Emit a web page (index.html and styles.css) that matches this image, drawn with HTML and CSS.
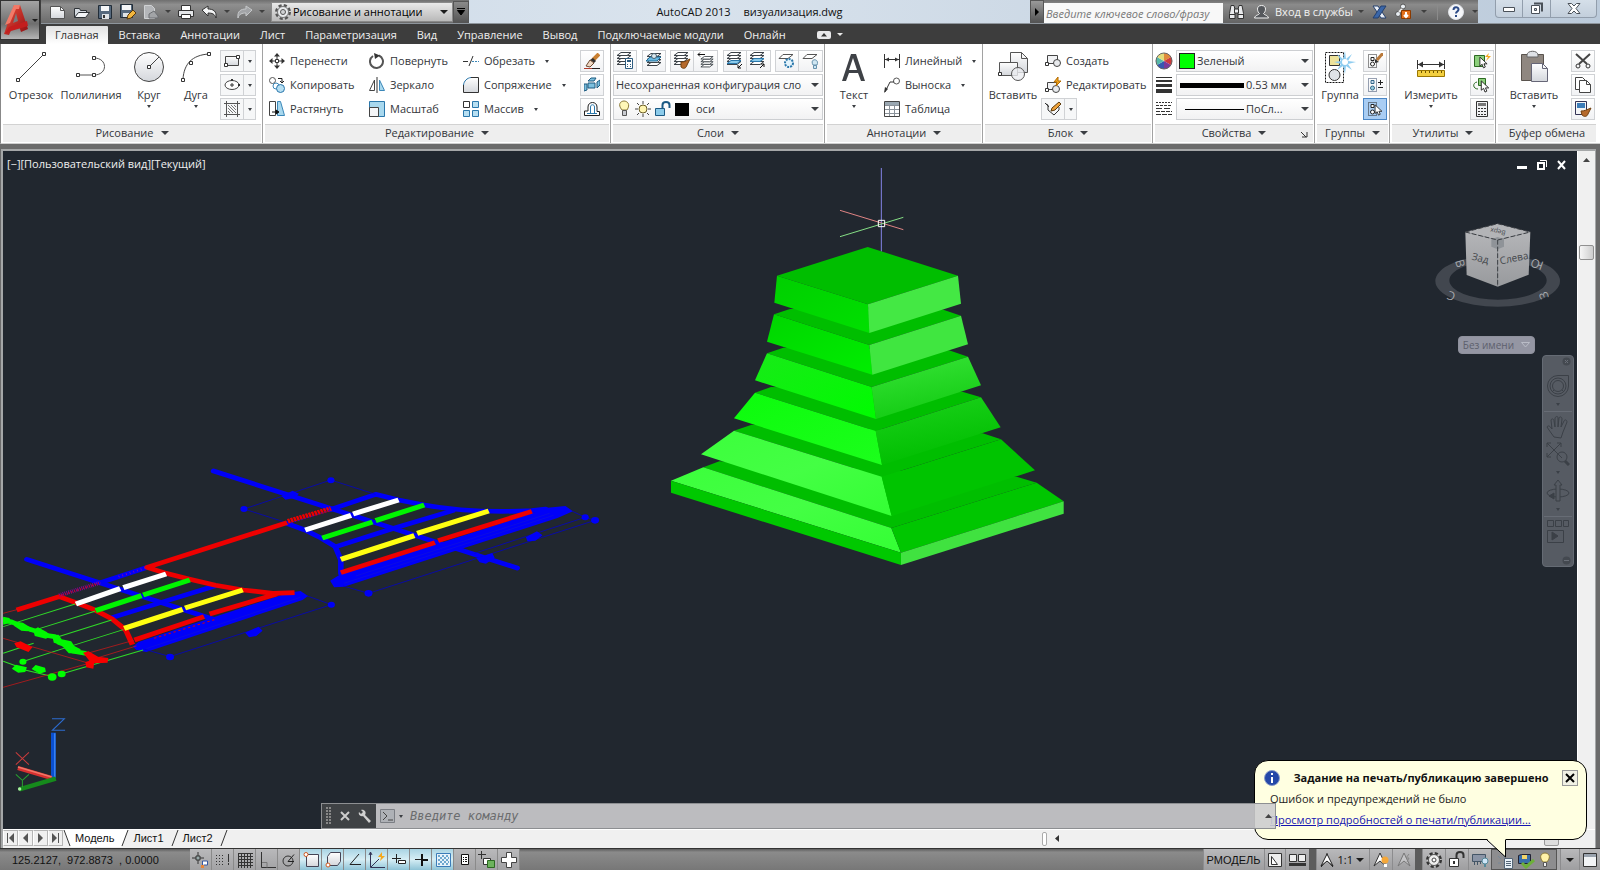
FILE: index.html
```html
<!DOCTYPE html>
<html lang="ru">
<head>
<meta charset="utf-8">
<title>AutoCAD 2013 – визуализация.dwg</title>
<link rel="stylesheet" href="styles.css">
</head>
<body>
<svg class="defs" aria-hidden="true">
  <defs>
    <linearGradient id="gDoc" x1="0" y1="0" x2="0" y2="1"><stop offset="0" stop-color="#fff"/><stop offset="1" stop-color="#d4d7dc"/></linearGradient>
    <linearGradient id="gRed" x1="0" y1="0" x2="1" y2="1"><stop offset="0" stop-color="#f0503c"/><stop offset="1" stop-color="#8e0d12"/></linearGradient>
    <linearGradient id="t1l" x1="0" y1="0" x2="1" y2="1"><stop offset="0" stop-color="#00cf00"/><stop offset="1" stop-color="#00e000"/></linearGradient>
    <linearGradient id="t2l" x1="0" y1="0" x2="1" y2="1"><stop offset="0" stop-color="#00d600"/><stop offset="1" stop-color="#00ee00"/></linearGradient>
    <linearGradient id="t3l" x1="0" y1="0" x2="1" y2="1"><stop offset="0" stop-color="#18ea18"/><stop offset="1" stop-color="#00fc00"/></linearGradient>
    <linearGradient id="t4l" x1="0" y1="0" x2="1" y2="1"><stop offset="0" stop-color="#0cfc0c"/><stop offset="1" stop-color="#1cff1c"/></linearGradient>
    <linearGradient id="t5l" x1="0" y1="0" x2="1" y2="1"><stop offset="0" stop-color="#3cff3c"/><stop offset=".5" stop-color="#44ff44"/><stop offset="1" stop-color="#34ff34"/></linearGradient>
    <linearGradient id="t3r" x1="0" y1="0" x2=".3" y2="1"><stop offset="0" stop-color="#38e438"/><stop offset="1" stop-color="#14cc14"/></linearGradient>
    <linearGradient id="t4r" x1="0" y1="0" x2=".3" y2="1"><stop offset="0" stop-color="#1cd21c"/><stop offset="1" stop-color="#00be00"/></linearGradient>
    <linearGradient id="gCube" x1="0" y1="0" x2="0" y2="1"><stop offset="0" stop-color="#b4b5b8"/><stop offset="1" stop-color="#989a9d"/></linearGradient>
  </defs>
  <symbol id="i-layers" viewBox="0 0 16 16"><g fill="#fff" stroke="#3c4248"><path d="M5 9.500h10l-4 3H1z"/><path d="M5 6.500h10l-4 3H1z"/><path d="M5 3.500h10l-4 3H1z"/><path d="M5 .5h10l-4 3H1z"/></g></symbol>
  <symbol id="i-node" viewBox="0 0 4 4"><path d="M.5.5h3v3h-3z" fill="#fff" stroke="#333"/></symbol>
  <symbol id="i-cursor" viewBox="0 0 10 14"><path d="M1 1v10l2.500-2 1.500 4 2-1-1.500-3.500H9z" fill="#fff" stroke="#222"/></symbol>
</svg>

<div class="app">
  <header class="head">
    <button class="app-btn" aria-label="Меню приложения">
      <svg width="26" height="32" viewBox="0 0 26 32"><path d="M10 1h6l8 24-7 3-2-6-7 2-3 7-5-1z" fill="url(#gRed)"/><path d="M12 9l2 8-5 2z" fill="#7a7a7c"/><path d="M1 30l4-7 18-6 1 5-17 5z" fill="#c41e1e"/><path d="M10 1l-9 20 5-2 6-14 3 0 1-4z" fill="#f27a68"/></svg>
      <i class="tri dark"></i>
    </button>
    <div class="titlebar">
      <div class="qat">
        <button aria-label="Создать"><svg width="18" height="16"><path d="M1.500 2.500h10l4 4v8h-14z" fill="url(#gDoc)" stroke="#555"/><path d="M11.500 2.500v4h4" fill="none" stroke="#555"/></svg></button>
        <button aria-label="Открыть"><svg width="18" height="16"><path d="M1.500 13.500v-9h5l1 2h6v3" fill="#d5dae0" stroke="#2f3337"/><path d="M1.500 13.500l4-5h11l-4 5z" fill="#f3f5f7" stroke="#2f3337"/></svg></button>
        <button aria-label="Сохранить"><svg width="16" height="16"><path d="M1.500 1.500h13v13h-13z" fill="#56697d" stroke="#222d38"/><path d="M4 2h8v5H4z" fill="#f5f6f7"/><path d="M5 10h7v5H5z" fill="#dfe3e6"/><path d="M6 11h2v3H6z" fill="#333"/></svg></button>
        <button aria-label="Сохранить как"><svg width="18" height="18"><path d="M1.500 1.500h12v13h-12z" fill="#56697d" stroke="#222d38"/><path d="M3 2h9v5H3z" fill="#f5f6f7"/><path d="M4 10h6v4H4z" fill="#dfe3e6"/><path d="M8 16l1-4 5-5 3 3-5 5z" fill="#f3b73f" stroke="#5c3a0a"/></svg></button>
        <button aria-label="Экспорт"><svg width="16" height="16"><path d="M1.500 1.500h7l3 3v10h-10z" fill="#b4b6b9" stroke="#d0d2d4"/><path d="M6 14v-4l5-3 4 5v2z" fill="#a2a4a7" stroke="#6c6f73"/></svg></button>
        <i class="tri dim"></i>
        <button aria-label="Печать"><svg width="18" height="16"><path d="M4.500 1.500h9v5h-9z" fill="#fff" stroke="#333"/><path d="M1.500 6.500h15v6h-15z" fill="#e4e6e9" stroke="#333"/><path d="M4.500 10.500h9v4h-9z" fill="#fff" stroke="#333"/></svg></button>
        <button aria-label="Отменить"><svg width="17" height="14"><path d="M1 5l6-4v3c5 0 9 2 8 9-1-4-4-5-8-5v3z" fill="#f4f5f6" stroke="#333"/></svg></button>
        <i class="tri dim"></i>
        <button aria-label="Повторить"><svg width="17" height="14"><path d="M16 5l-6-4v3C5 4 1 6 2 13c1-4 4-5 8-5v3z" fill="#a2a4a7" stroke="#c6c8ca"/></svg></button>
        <i class="tri dim"></i>
        <label class="workspace">
          <svg width="18" height="18" viewBox="0 0 18 18"><circle cx="9" cy="9" r="6.500" fill="#d6d9dd" stroke="#555" stroke-width="3" stroke-dasharray="3 2.100"/><circle cx="9" cy="9" r="5.500" fill="#e8eaec" stroke="#777"/><circle cx="9" cy="9" r="2.500" fill="#d0d2d4" stroke="#555"/></svg>
          <select aria-label="Рабочее пространство"><option>Рисование и аннотации</option></select><i class="tri dark big"></i>
        </label>
        <button class="qat-more" aria-label="Настройка"><svg width="10" height="8"><path d="M1 .5h8M1.500 2.500h7L5 7z" stroke="#000"/></svg></button>
      </div>
      <h1 class="doc-title"><span>AutoCAD 2013</span><span>визуализация.dwg</span></h1>
      <div class="info">
        <button class="info-toggle" aria-label="Скрыть поиск"><svg width="6" height="10"><path d="M1 1l4 4-4 4z"/></svg></button>
        <input class="search" type="text" placeholder="Введите ключевое слово/фразу" aria-label="Поиск">
        <button aria-label="Найти"><svg width="17" height="16"><g fill="#e9eaec" stroke="#333"><path d="M3 1.500h3l1 4v9H1.500v-5z"/><path d="M11 1.500h3l1.500 8v5H10v-9z"/><path d="M6.500 5h4v4h-4z"/></g><path d="M1 10.500h6M10 10.500h6" stroke="#333"/></svg></button>
        <button class="signin"><svg width="17" height="16"><path d="M8.500 1.500c6 0 4 7 2 8 1 2 4 1 5 4.500h-14c1-3.500 4-2.500 5-4.500-2-1-4-8 2-8z" fill="#55585c" stroke="#f2f2f2"/></svg><span>Вход в службы</span><i class="tri dim"></i></button>
        <button class="xch" aria-label="Exchange"><svg width="15" height="14"><path d="M1 1h5l8 12H9z" fill="#e9eef5" stroke="#25406e"/><path d="M14 1H9L1 13h5z" fill="#3a66a8" stroke="#25406e"/></svg></button>
        <button aria-label="Подключение"><svg width="18" height="17"><circle cx="8" cy="3.500" r="2.500" fill="#e8edf2" stroke="#555"/><circle cx="3" cy="11" r="2.500" fill="#e8edf2" stroke="#555"/><path d="M7 6l-3 3" stroke="#eee" stroke-width="2"/><path d="M6.500 7.500h9v8h-9z" fill="#e2701c" stroke="#8b3a00"/><path d="M11 9v5M9 12l2 2 2-2" stroke="#fff" stroke-width="2" fill="none"/></svg></button>
        <i class="tri dim"></i><i class="bar"></i>
        <button aria-label="Справка"><svg width="16" height="16"><circle cx="8" cy="8" r="7.500" fill="#f6f7f9" stroke="#dfe2e6"/><path d="M5.500 6c0-3.500 5-3.500 5-.5 0 2-2.500 2-2.500 4M8 11v2" fill="none" stroke="#2c4a86" stroke-width="2"/></svg></button>
        <i class="tri dim"></i>
      </div>
      <div class="winctl">
        <button aria-label="Свернуть"><svg width="14" height="8"><path d="M1.500 2.500h11v4h-11z" fill="#fff" stroke="#4a5159"/></svg></button>
        <button aria-label="Свернуть в окно"><svg width="13" height="13"><path d="M4 1.500h8v8" fill="none" stroke="#4a5159" stroke-width="2"/><path d="M1.500 3.500h8v8h-8z" fill="#fff" stroke="#4a5159"/><path d="M4.500 6.500h2v2h-2z" fill="#ccd5df" stroke="#4a5159"/></svg></button>
        <button class="close" aria-label="Закрыть"><svg width="14" height="11"><path d="M1 .5h3.500L7 3l2.500-2.500H13L9 5.500l4 5H9.500L7 8l-2.500 2.500H1l4-5z" fill="#fff" stroke="#4a5159"/></svg></button>
      </div>
    </div>
    <nav class="tabs">
      <a href="#" class="on">Главная</a><a href="#">Вставка</a><a href="#">Аннотации</a><a href="#">Лист</a><a href="#">Параметризация</a><a href="#">Вид</a><a href="#">Управление</a><a href="#">Вывод</a><a href="#">Подключаемые модули</a><a href="#">Онлайн</a>
      <button class="fold" aria-label="Свернуть ленту"><svg width="14" height="8"><rect width="14" height="8" rx="2" fill="#e8e8ea"/><path d="M4 5.500h6L7 2z" fill="#333"/></svg><i class="tri lite"></i></button>
    </nav>
  </header>

  <main class="ribbon">
    <section class="panel p-draw">
      <div class="body">
        <button class="bigbtn w58"><svg width="32" height="32"><path d="M3 30L29 4" stroke="#444"/><use href="#i-node" x="1" y="28" width="4" height="4"/><use href="#i-node" x="27" y="2" width="4" height="4"/></svg><span>Отрезок</span></button>
        <button class="bigbtn w64"><svg width="32" height="32"><path d="M3 25h16c14 0 14-17 0-17" stroke="#555" fill="none"/><use href="#i-node" x="1" y="23" width="4" height="4"/><use href="#i-node" x="17" y="23" width="4" height="4"/><use href="#i-node" x="17" y="6" width="4" height="4"/></svg><span>Полилиния</span></button>
        <button class="bigbtn w52"><svg width="32" height="32"><circle cx="16" cy="17" r="14.500" fill="url(#gDoc)" stroke="#444"/><path d="M16 17l10-10" stroke="#444"/><use href="#i-node" x="14" y="15" width="4" height="4"/></svg><span>Круг</span><i class="tri"></i></button>
        <button class="bigbtn w42"><svg width="32" height="32"><path d="M3 29C4 14 12 5 29 4" fill="none" stroke="#444"/><use href="#i-node" x="1" y="28" width="4" height="4"/><use href="#i-node" x="9" y="11" width="4" height="4"/><use href="#i-node" x="27" y="2" width="4" height="4"/></svg><span>Дуга</span><i class="tri"></i></button>
        <div class="stack end">
          <button class="ib split" aria-label="Прямоугольник"><svg width="16" height="16"><path d="M1.500 3.500h13v9h-13z" fill="url(#gDoc)" stroke="#444"/><use href="#i-node" x="0" y="10" width="4" height="4"/><use href="#i-node" x="12" y="2" width="4" height="4"/></svg><i class="tri"></i></button>
          <button class="ib split" aria-label="Эллипс"><svg width="16" height="16"><ellipse cx="8" cy="8" rx="7" ry="4.500" fill="#fff" stroke="#444"/><path d="M8 6v4M6 8h4" stroke="#333"/><path d="M14 7h2v2h-2zM7 2h2v2H7z" fill="#333"/></svg><i class="tri"></i></button>
          <button class="ib split" aria-label="Штриховка"><svg width="16" height="16"><path d="M2.500 0v16M13.500 0v16M0 2.500h16M0 13.500h16" stroke="#555"/><path d="M4 4l8 8M7 4l5 5M4 7l5 5M10 4l2 2M4 10l2 2" stroke="#777"/></svg><i class="tri"></i></button>
        </div>
      </div>
      <h2>Рисование<i class="tri big"></i></h2>
    </section>

    <section class="panel p-edit">
      <div class="body">
        <div class="cmds three">
          <button class="cmd"><svg width="16" height="16"><path d="M8 0l3 3.500H5zM8 16l3-3.500H5zM0 8l3.500-3v6zM16 8l-3.500-3v6z" fill="#333"/><path d="M8 2v4M8 10v4M2 8h4M10 8h4" stroke="#333"/><use href="#i-node" x="6" y="6" width="4" height="4"/></svg>Перенести</button>
          <button class="cmd"><svg width="16" height="16"><path d="M4 3a6.500 6.500 0 1 0 6-.5" fill="none" stroke="#555" stroke-width="2"/><path d="M5 0l6 2.500L6 6z" fill="#333"/></svg>Повернуть</button>
          <button class="cmd"><svg width="16" height="16"><path d="M0 8.500h5M6 13l4-10" stroke="#333"/><path d="M9 8.500h7" stroke="#3b87b8" stroke-dasharray="2 1"/></svg>Обрезать<i class="tri"></i></button>
          <button class="cmd"><svg width="16" height="16"><circle cx="3.500" cy="3.500" r="3" fill="#fff" stroke="#555"/><circle cx="7" cy="9" r="3" fill="#fff" stroke="#3b87b8"/><circle cx="11.500" cy="11.500" r="4" fill="#b7dff2" stroke="#2a77ab"/><path d="M9 1.500h4v4M11 4l2 2 2-2" fill="none" stroke="#222"/></svg>Копировать</button>
          <button class="cmd"><svg width="16" height="16"><path d="M5.500 3v10.500h-5z" fill="#fff" stroke="#444"/><path d="M10.500 3v10.500h5z" fill="#a8d8ee" stroke="#3b87b8"/><path d="M8 0v16" stroke="#333"/></svg>Зеркало</button>
          <button class="cmd"><svg width="16" height="16"><path d="M.5 15.500V9C1 4 4 1 9 .5h6.500v15z" fill="url(#gDoc)"/><path d="M.5 8C1 4 4 1 8 .5" fill="none" stroke="#2a77ab"/><path d="M8 .5h7.500v15H.5V8" fill="none" stroke="#333"/></svg>Сопряжение<i class="tri"></i></button>
          <button class="cmd"><svg width="16" height="16"><path d="M.5.5h6v14h-6z" fill="#fff" stroke="#444"/><path d="M8.500.5h3l4 14h-7z" fill="#a8d8ee" stroke="#3b87b8"/><path d="M3 11h5M7 9l3 2-3 2z" stroke="#111" fill="#111"/></svg>Растянуть</button>
          <button class="cmd"><svg width="16" height="16"><path d="M.5.5h15v15h-15z" fill="#a8d8ee" stroke="#2a77ab"/><path d="M.5 6.500h9v9h-9z" fill="#f5f6f8" stroke="#444"/></svg>Масштаб</button>
          <button class="cmd"><svg width="16" height="16"><path d="M.5.5h6v6h-6z" fill="#fff" stroke="#333"/><path d="M9.500.5h6v6h-6zM.5 9.500h6v6h-6zM9.500 9.500h6v6h-6z" fill="#b7dff2" stroke="#2a77ab"/></svg>Массив<i class="tri"></i></button>
        </div>
        <div class="stack end">
          <button class="ib" aria-label="Стереть"><svg width="16" height="16"><path d="M15 1L9 7" stroke="#c98032" stroke-width="4"/><path d="M9 5l3 3-2 2-4-3z" fill="#333"/><path d="M6 7l4 3-4 4-4-1z" fill="#f0d9c4" stroke="#6b4a33"/><path d="M0 15.500h8" stroke="#b03a2c"/><path d="M8 15.500h8" stroke="#222"/></svg></button>
          <button class="ib" aria-label="Расчленить"><svg width="16" height="16"><path d="M4 4l3-3h5l-2 3zM4 6h7v5H4zM13 5l3-2v5l-3 3zM0 7h3v6l-3 1z" fill="#7cc0df" stroke="#1d5b80"/></svg></button>
          <button class="ib" aria-label="Подобие"><svg width="16" height="16"><path d="M.5 14.500h15v-4H13V6c0-6-9-6-9 0v4H.5z" fill="#fff" stroke="#222"/><path d="M3 12.500h10M6.500 12V6c0-3 4-3 4 0v6" fill="none" stroke="#2a77ab"/></svg></button>
        </div>
      </div>
      <h2>Редактирование<i class="tri big"></i></h2>
    </section>

    <section class="panel p-layers">
      <div class="body col">
        <div class="row">
          <button class="ib" aria-label="Свойства слоя"><svg width="18" height="18"><use href="#i-layers" x="0" y="0" width="16" height="16"/><path d="M9.500 6.500h7v10h-7z" fill="#fff" stroke="#2f5d80"/><path d="M11 8h4v2h-4zM11 12h1v1h-1zM14 12h1v1h-1zM11 14h1v1h-1zM14 14h1v1h-1z" fill="#2f5d80"/></svg></button>
          <button class="ib" aria-label="Сделать текущим"><svg width="16" height="16"><use href="#i-layers" width="16" height="16"/><path d="M4 4h11l-4 4H0z" fill="#69b9e2" stroke="#1f6a96"/><circle cx="8" cy="3" r="2.500" fill="#dbe9f0" stroke="#48606e"/></svg></button>
          <span class="pair"><button class="ib" aria-label="Копировать свойства слоя"><svg width="18" height="18"><use href="#i-layers" width="16" height="16"/><path d="M8 10c4 0 5-1 9-3l-3 6c-1 4-4 4-6 2z" fill="#b66a2c" stroke="#70400f"/></svg></button><button class="ib" aria-label="Предыдущий слой"><svg width="18" height="18"><use href="#i-layers" x="3" y="4" width="14" height="14"/><path d="M1 2.500h7M3 .5l-2 2 2 2" fill="none" stroke="#111"/></svg></button></span>
          <span class="pair"><button class="ib" aria-label="Изолировать"><svg width="18" height="18"><use href="#i-layers" width="16" height="16"/><path d="M5 8.500h10l-4 3H1z" fill="#8ccbea" stroke="#2a77ab"/><path d="M16 12l-4 4M12 13v3h3" stroke="#111" fill="none"/></svg></button><button class="ib" aria-label="Отключить изоляцию"><svg width="18" height="18"><use href="#i-layers" width="16" height="16"/><path d="M5 6.500h10l-4 3H1z" fill="#8ccbea" stroke="#2a77ab"/><path d="M11 16l4-4M12 12h3v3" stroke="#111" fill="none"/></svg></button></span>
          <span class="pair"><button class="ib" aria-label="Заморозить"><svg width="18" height="18"><path d="M5 2.500h10l-5 4H1z" fill="#fff" stroke="#555"/><circle cx="11" cy="11" r="4" fill="#e3f3fb" stroke="#2a77ab" stroke-width="2" stroke-dasharray="2 1"/></svg></button><button class="ib" aria-label="Отключить"><svg width="18" height="18"><path d="M5 2.500h10l-5 4H1z" fill="#fff" stroke="#555"/><path d="M11 13c-4-7 7-7 4 0zM11.500 13.500h3v3h-3z" fill="#cfe6f2" stroke="#6691ac"/></svg></button></span>
        </div>
        <label class="combo"><select aria-label="Конфигурация слоев"><option>Несохраненная конфигурация сло</option></select><i class="tri big"></i></label>
        <label class="combo"><svg class="layer-ico" width="76" height="18"><path d="M6 10C1 4 5 1 8 1s7 3 3 9z" fill="#fff7b8" stroke="#8b7a3a"/><path d="M6.500 10.500h4v5h-4z" fill="#c9cbd0" stroke="#555"/><circle cx="27" cy="9" r="4" fill="#fff5b0" stroke="#6a5d28"/><path d="M27 1v3M27 14v3M19 9h3M32 9h3M21 3l2 2M33 3l-2 2M21 15l2-2M33 15l-2-2" stroke="#444"/><path d="M39.500 8.500h9v7h-9z" fill="#8ccbea" stroke="#1c5a84"/><path d="M46.500 8V5c0-4 7-4 7 0v3" fill="none" stroke="#1c5a84" stroke-width="2"/><path d="M59 3h14v13H59z"/></svg><select aria-label="Слой"><option>оси</option></select><i class="tri big"></i></label>
      </div>
      <h2>Слои<i class="tri big"></i></h2>
    </section>

    <section class="panel p-anno">
      <div class="body">
        <button class="bigbtn w54"><svg width="32" height="32"><path fill-rule="evenodd" d="M13 4h5l9 27h-4l-3-8h-9l-3 8H4zM15 8l-4 12h8z" fill="#3e4146"/></svg><span>Текст</span><i class="tri"></i></button>
        <div class="cmds one">
          <button class="cmd"><svg width="16" height="16"><path d="M.5 1v14M15.500 1v14M1 6.500h14" stroke="#333"/><path d="M1 6.500l4-2v4zM15 6.500l-4-2v4z" fill="#333"/></svg>Линейный<i class="tri"></i></button>
          <button class="cmd"><svg width="16" height="16"><circle cx="12.500" cy="4" r="3" fill="#fff" stroke="#555"/><path d="M1 15l5-10h4" fill="none" stroke="#333"/><path d="M0 16l1-6 3 2z" fill="#333"/></svg>Выноска<i class="tri"></i></button>
          <button class="cmd"><svg width="16" height="16"><path d="M.5.5h15v15H.5z" fill="#fff" stroke="#444"/><path d="M1 1h14v3H1z" fill="#9aa7b1"/><path d="M1 4.500h14M1 8.500h14M1 12.500h14M5.500 4v11M10.500 4v11" stroke="#8a929a"/></svg>Таблица</button>
        </div>
      </div>
      <h2>Аннотации<i class="tri big"></i></h2>
    </section>

    <section class="panel p-block">
      <div class="body">
        <button class="bigbtn w56"><svg width="32" height="32"><path d="M13.500 2.500h11l6 6v14h-17z" fill="url(#gDoc)" stroke="#555"/><path d="M24.500 2.500v6h6" fill="none" stroke="#555"/><path d="M2.500 12.500h18v13h-18z" fill="url(#gDoc)" stroke="#555"/><circle cx="21" cy="24" r="6.500" fill="#eceef1" fill-opacity=".8" stroke="#555"/><use href="#i-node" x="1" y="22" width="4" height="4"/></svg><span>Вставить</span></button>
        <div class="stack grow">
          <button class="cmd"><svg width="16" height="16"><path d="M2.500 2.500h10v8h-10z" fill="#f1f2f4" stroke="#444"/><circle cx="12" cy="10" r="3.500" fill="#e8eaed" stroke="#444"/><use href="#i-node" x="0" y="9" width="4" height="4"/></svg>Создать</button>
          <button class="cmd"><svg width="16" height="16"><path d="M2.500 5.500h9v7h-9z" fill="#f1f2f4" stroke="#444"/><circle cx="11" cy="12" r="3.500" fill="#e8eaed" stroke="#444"/><path d="M13 0l-4 5h3l-1 4 5-5h-3z" fill="#f5a81c" stroke="#b36b00"/><use href="#i-node" x="0" y="11" width="4" height="4"/></svg>Редактировать</button>
          <button class="ib split" aria-label="Атрибуты"><svg width="16" height="16"><path d="M1 3l2 1v5l6 5 5-5V6M0 2l4 4" fill="none" stroke="#333"/><path d="M6 10l1-3 7-6 2 2-6 6z" fill="#f0a23a" stroke="#5c3a0a"/></svg><i class="tri"></i></button>
        </div>
      </div>
      <h2>Блок<i class="tri big"></i></h2>
    </section>

    <section class="panel p-props">
      <div class="body col">
        <div class="row prop"><svg width="18" height="18"><path d="M9 9V1a8 8 0 0 1 7 4z" fill="#e08a3a"/><path d="M9 9l7-4a8 8 0 0 1 0 8z" fill="#cf3a3a"/><path d="M9 9l7 4a8 8 0 0 1-7 4z" fill="#7a3a9a"/><path d="M9 9v8a8 8 0 0 1-7-4z" fill="#3658b0"/><path d="M9 9l-7 4a8 8 0 0 1 0-8z" fill="#56b8a8"/><path d="M9 9L2 5a8 8 0 0 1 7-4z" fill="#e3dc7a"/><circle cx="9" cy="9" r="8" fill="none" stroke="#666"/></svg><label class="combo"><i class="swatch"></i><select aria-label="Цвет"><option>Зеленый</option></select><i class="tri big"></i></label></div>
        <div class="row prop"><svg width="18" height="18"><path d="M1 1.500h16" stroke="#333"/><path d="M1 5h16" stroke="#333" stroke-width="2"/><path d="M1 9.500h16" stroke="#333" stroke-width="3"/><path d="M1 15h16" stroke="#333" stroke-width="4"/></svg><label class="combo"><i class="lw"></i><select aria-label="Вес линий"><option>0.53 мм</option></select><i class="tri big"></i></label></div>
        <div class="row prop"><svg width="18" height="18"><g stroke="#333"><path d="M1 2.500h16" stroke-dasharray="2 1"/><path d="M1 5.500h16" stroke-dasharray="3 1"/><path d="M1 8.500h16" stroke-dasharray="6 2"/><path d="M1 11.500h16" stroke-dasharray="4 1"/><path d="M1 14.500h16" stroke-dasharray="5 1"/></g></svg><label class="combo"><i class="lt"></i><select aria-label="Тип линий"><option>ПоСл...</option></select><i class="tri big"></i></label></div>
      </div>
      <h2>Свойства<i class="tri big"></i><svg class="launch" width="7" height="7"><path d="M0 1l5 5M6 1v5H1" fill="none" stroke="#333"/></svg></h2>
    </section>

    <section class="panel p-group">
      <div class="body">
        <button class="bigbtn w46"><svg width="34" height="34"><path d="M2.500 2.500h18v30h-18z" fill="#fff" stroke="#111" stroke-dasharray="2 1"/><path d="M6.500 5.500h10v10h-10z" fill="#eee39a" stroke="#333"/><circle cx="11.500" cy="25" r="5.500" fill="#dfe3e8" stroke="#333"/><path d="M22 1l1 8 6-5-4 7 8 1-8 2 4 6-6-4-1 8-2-8-6 4 4-6-7-2 7-1-4-7 6 5z" fill="#8fcdf0"/><circle cx="22" cy="12" r="3" fill="#fff"/></svg><span>Группа</span></button>
        <div class="stack end">
          <button class="ib" aria-label="Разгруппировать"><svg width="16" height="16"><path d="M1.500 1.500h8v13h-8z" fill="none" stroke="#222" stroke-dasharray="1 1"/><path d="M4 4.500h3v3H4z" fill="#fff" stroke="#222"/><circle cx="5.500" cy="11" r="2" fill="#fff" stroke="#222"/><path d="M16 0l-6 7" stroke="#b9793a" stroke-width="3"/><path d="M8 6l4 3-4 1z" fill="#333"/></svg></button>
          <button class="ib" aria-label="Редактировать группу"><svg width="16" height="16"><path d="M1.500 1.500h8v13h-8z" fill="none" stroke="#346" stroke-dasharray="1 1"/><path d="M4 3.500h3v3H4z" fill="#cde" stroke="#368"/><circle cx="5.500" cy="11" r="2" fill="#9cd" stroke="#368"/><path d="M11 5.500h5M13.500 3v5M11 10.500h5" stroke="#222"/></svg></button>
          <button class="ib on" aria-label="Выбор группы"><svg width="16" height="16"><path d="M1.500 1.500h8v13h-8z" fill="none" stroke="#222" stroke-dasharray="1 1"/><path d="M4 3.500h3v3H4z" fill="#fff" stroke="#222"/><circle cx="5.500" cy="11" r="2" fill="#fff" stroke="#222"/><use href="#i-cursor" x="7" y="3" width="9" height="12"/></svg></button>
        </div>
      </div>
      <h2>Группы<i class="tri big"></i></h2>
    </section>

    <section class="panel p-util">
      <div class="body">
        <button class="bigbtn w78"><svg width="32" height="32"><path d="M2.500 10v9M29.500 10v9M3 14.500h26" stroke="#333"/><path d="M3 14.500l5-3v6zM29 14.500l-5-3v6z" fill="#333"/><path d="M2.500 20.500h27v6h-27z" fill="#f3cf3f" stroke="#9a7600"/><path d="M6.500 21v2M10.500 21v2M14.500 21v2M18.500 21v2M22.500 21v2M26.500 21v2" stroke="#6d5300"/></svg><span>Измерить</span><i class="tri"></i></button>
        <div class="stack end">
          <button class="ib" aria-label="Быстрый выбор"><svg width="18" height="16"><path d="M1.500 2.500h10v11h-10z" fill="#8ccf7c" stroke="#2c6a22"/><use href="#i-cursor" x="6" y="3" width="9" height="13"/><path d="M16 0l-4 4h3l-2 4 5-5h-3z" fill="#f5a81c"/></svg></button>
          <button class="ib" aria-label="Выбрать все"><svg width="18" height="18"><path d="M5.500 2.500h7v7h-7z" fill="#8ccf7c" stroke="#2c6a22"/><path d="M4 6c-5 1-4 7 1 7" fill="none" stroke="#2c6a22"/><use href="#i-cursor" x="7" y="4" width="10" height="13"/></svg></button>
          <button class="ib" aria-label="Калькулятор"><svg width="14" height="16"><path d="M1.500.5h11v15h-11z" fill="#f1f2f4" stroke="#333"/><path d="M3 2h8v3H3z" fill="#777"/><path d="M3 7h2v1H3zM6 7h2v1H6zM9 7h2v1H9zM3 10h2v1H3zM6 10h2v1H6zM9 10h2v1H9zM3 13h2v1H3zM6 13h2v1H6zM9 13h2v1H9z" fill="#333"/></svg></button>
        </div>
      </div>
      <h2>Утилиты<i class="tri big"></i></h2>
    </section>

    <section class="panel p-clip">
      <div class="body">
        <button class="bigbtn w72"><svg width="32" height="34"><path d="M3.500 4.500h22v26h-22z" fill="#8f8780" stroke="#5a544e"/><path d="M9 5c0-5 11-5 11 0v2H9z" fill="#dfe2e6" stroke="#666"/><path d="M13.500 13.500h11l5 5v13h-16z" fill="url(#gDoc)" stroke="#667"/><path d="M24.500 13.500v5h5" fill="none" stroke="#667"/></svg><span>Вставить</span><i class="tri"></i></button>
        <div class="stack end">
          <button class="ib" aria-label="Вырезать"><svg width="16" height="16"><path d="M1 1l11 10M15 1L4 11" stroke="#444" stroke-width="2"/><circle cx="3" cy="13" r="2" fill="none" stroke="#333"/><circle cx="13" cy="13" r="2" fill="none" stroke="#333"/></svg></button>
          <button class="ib" aria-label="Копировать"><svg width="16" height="16"><path d="M.5.5h7l3 3v9H.5z" fill="#fff" stroke="#444"/><path d="M4.500 3.500h7l4 4v8h-11z" fill="#fff" stroke="#444"/><path d="M11.500 3.500v4h4" fill="none" stroke="#444"/></svg></button>
          <button class="ib" aria-label="Копирование свойств"><svg width="18" height="18"><path d="M1.500 1.500h11v13h-11z" fill="#f3f4f6" stroke="#335"/><path d="M3 3h8v5H3z" fill="#3b7cb8"/><path d="M7 11c4 0 5-1 10-3l-3 6c-1 3-4 3-6 1z" fill="#b66a2c" stroke="#70400f"/></svg></button>
        </div>
      </div>
      <h2>Буфер обмена</h2>
    </section>
  </main>

  <div class="work">
    <div class="viewport">
      <svg class="drawing" viewBox="3 151 1574 678" preserveAspectRatio="xMinYMin slice" role="img" aria-label="Чертеж">
        <g transform="translate(0 450) scale(.3954 .3333)" fill="none" stroke-linejoin="round">
          <g stroke="#0000f8" stroke-width="14" stroke-linecap="round">
            <path d="M540 63L1308 354M68 328L545 510"/>
            <path d="M725 220L771 240L812 264L848 290L862 330L862 370M837 178L950 133L1008 150L1073 165C1150 182 1230 188 1345 182L1380 177"/>
            <path d="M850 290L990 237L1145 182M285 502L400 460L543 408M254 398L372 352"/>
          </g>
          <g fill="#0000f8"><path d="M835 392L862 372L1100 284L1345 190L1385 173L1430 168L1449 184L1410 204L870 410L845 412z"/><path d="M336 590L350 576L730 428L760 423L779 438L765 450L370 606L345 600z"/></g>
          <g stroke="#0000d0" stroke-width="2"><path d="M725 218L617 177L837 90L950 133M1448 184L1480 202M1505 211L932 430L868 408M1480 202L1200 310M775 437L838 464L430 620L366 598M1480 202L1505 211"/></g>
          <path d="M870 400L1400 196M370 596L760 442M900 378L1390 190" stroke="#2020c0" stroke-width="1"/>
          <g fill="#0000f8"><circle cx="617" cy="177" r="9"/><circle cx="837" cy="91" r="9"/><path d="M712 138l28-16 16 9-10 12-24 6zM1330 262l28-18 14 12-18 16-20 2zM1205 325l40-16 6 14-22 18-16-4zM620 548l34-18 10 12-16 16-18 4z"/><circle cx="1480" cy="202" r="9"/><circle cx="1505" cy="211" r="10"/><circle cx="932" cy="430" r="10"/><circle cx="838" cy="464" r="9"/><circle cx="430" cy="621" r="10"/></g>
          <g stroke="#ee0000" stroke-width="14">
            <path d="M726 218L372 352L420 370L480 388L545 406L615 420L690 430L745 428M42 480L150 440L190 457L240 480L285 508L318 540L335 584M862 368L1100 278M1108 272L1345 184M340 570L516 500M530 492L700 432"/>
            <path d="M728 214L837 176" stroke-dasharray="6 2"/>
          </g>
          <path d="M690 430L745 428L650 446z" fill="#ee0000"/>
          <path d="M728 222L837 180" stroke="#4000c0" stroke-width="3" stroke-dasharray="4 5"/>
          <g stroke="#9000a0" stroke-width="12" stroke-dasharray="2 3"><path d="M150 436L254 398"/><path d="M300 380L370 353" stroke-width="6" stroke-dasharray="2 8"/></g>
          <path d="M150 438L254 398" stroke="#c00030" stroke-width="5" stroke-dasharray="3 5"/>
          <path d="M390 565L545 508" stroke="#e00000" stroke-width="3" stroke-dasharray="6 7"/>
          <path d="M772 240L888 196M893 192L1008 150M192 462L304 416M312 413L420 372" stroke="#fff" stroke-width="15"/>
          <path d="M815 264L942 216M950 212L1073 165M242 482L358 437M362 435L480 390" stroke="#00f500" stroke-width="15"/>
          <path d="M862 328L1048 257M1055 250L1236 183M314 535L462 478M468 474L614 420" stroke="#ff1" stroke-width="15"/>
          <path d="M8 530L190 462M75 545L240 484M135 565L282 510M175 590L312 539M60 634L175 590M8 610L85 580M155 672L362 600M8 634L50 652M50 656L135 680" stroke="#30d828" stroke-width="3"/>
          <path d="M8 510L30 516L60 532L95 545L115 556L138 560L150 578L172 588L185 604L215 610" stroke="#00f800" stroke-width="14" stroke-linecap="round"/>
          <path d="M8 500l16 4 4 14-20 6zM34 514l24 4 18 14-6 12-16-2-18-14zM84 540l12-8 22 14 12 12-14 8-28-8zM132 556l16-2 8 14 24 6 8 14 16 10-4 12-26 0-12-16-8-10-18-6z" fill="#00f800"/>
          <path d="M8 490L46 478M8 565L225 640L8 712M215 612L338 571M240 626L345 588M50 583L70 594" stroke="#d01818" stroke-width="2"/>
          <g fill="#0f0"><path d="M30 656l10-12 28 8-4 14-18 2zM80 657l10-12 24 8 2 12-16 6z"/><circle cx="58" cy="635" r="9"/><circle cx="132" cy="681" r="11"/><circle cx="156" cy="672" r="10"/></g>
          <g fill="#f80000"><path d="M36 580l16-6 30 18-10 14-30-14zM210 608l14-4 24 16 26 4-2 14-34 2-2 16-18-4-2-16 10-4z"/></g>
        </g>
        <g transform="translate(650 150) scale(.33333)">
          <path d="M694 54V305" stroke="#8585e6" stroke-width="3"/><path d="M570 181L760 239" stroke="#e08484" stroke-width="3"/><path d="M570 260L760 202" stroke="#86e086" stroke-width="3"/><path d="M685 211h19v19h-19z" fill="none" stroke="#fff" stroke-width="3"/>
          <path d="M160 952L208 934L1100 980L1160 998L724 1134z" fill="#00be00"/>
          <path d="M160 952L724 1134L753 1208L63 992z" fill="url(#t5l)"/><path d="M724 1134L1160 998L1241 1054L753 1208z" fill="#00c600"/>
          <path d="M63 992L753 1208V1245L63 1028z" fill="#00c800"/><path d="M753 1208L1241 1054V1091L753 1245z" fill="#40e240"/>
          <path d="M252 842L305 824L998 850L1053 868L695 980z" fill="#00be00"/><path d="M252 842L695 980L725 1098L153 913z" fill="url(#t5l)"/><path d="M695 980L1053 868L1155 961L725 1098z" fill="#00c400"/>
          <path d="M315 728L363 711L937 725L993 742L677 843z" fill="#00be00"/><path d="M315 728L677 843L696 945L252 805z" fill="url(#t4l)"/><path d="M677 843L993 742L1052 832L696 945z" fill="url(#t4r)"/>
          <path d="M351 610L400 593L897 601L954 620L665 711z" fill="#00be00"/><path d="M351 610L665 711L678 807L315 691z" fill="url(#t3l)"/><path d="M665 711L954 620L993 706L678 807z" fill="url(#t3r)"/>
          <path d="M372 493L420 477L880 479L933 497L658 585z" fill="#00be00"/><path d="M372 493L658 585L667 674L351 575z" fill="url(#t2l)"/><path d="M658 585L933 497L954 583L667 674z" fill="#40e640"/>
          <path d="M653 291L924 377L654 463L381 377z" fill="#00be00"/><path d="M381 377L654 463L658 549L373 458z" fill="url(#t1l)"/><path d="M654 463L924 377L933 461L658 549z" fill="#44e844"/>
        </g>
        <g transform="translate(0 700) scale(.3444 .3333)" fill="none">
          <path d="M155 98V235" stroke="#0a4fd0" stroke-width="14"/><path d="M159 100V232" stroke="#3c86f4" stroke-width="4"/>
          <path d="M52 204L150 234" stroke="#d83030" stroke-width="13"/><path d="M52 201L150 231" stroke="#f07868" stroke-width="4"/>
          <path d="M56 268L162 236" stroke="#168a1c" stroke-width="13"/><circle cx="57" cy="267" r="5" fill="#a8f0a0"/>
          <path d="M151 56H187L152 91H189" stroke="#2c6cd0" stroke-width="3"/><path d="M46 157L84 194M84 157L46 194" stroke="#c83c3c" stroke-width="3"/><path d="M46 223L65 241L84 223M65 241V262" stroke="#28a030" stroke-width="3"/>
        </g>
      </svg>
      <p class="vp-label">[−][Пользовательский вид][Текущий]</p>
      <div class="vp-ctl">
        <button aria-label="Свернуть вид"><svg width="12" height="12"><path d="M1 7h10v3H1z" fill="#fff"/></svg></button>
        <button aria-label="Восстановить вид"><svg width="12" height="12"><path d="M4 1.500h6.500V8" fill="none" stroke="#fff"/><path d="M2 4h6v6H2z" fill="none" stroke="#fff" stroke-width="2"/></svg></button>
        <button aria-label="Закрыть вид"><svg width="12" height="12"><path d="M2 2l7 8M9 2l-7 8" stroke="#fff" stroke-width="2"/></svg></button>
      </div>
      <svg class="viewcube" viewBox="100 210 390 270" role="img" aria-label="Видовой куб">
        <path fill-rule="evenodd" d="M107 393a187 77 0 1 0 374 0a187 77 0 1 0-374 0zM149 391a146 58 0 1 1 292 0a146 58 0 1 1-292 0z" fill="#42474f"/>
        <g class="compass"><text transform="translate(180 341) rotate(75)" dy="11">В</text><text transform="translate(412 341) rotate(200)" dy="11">Ю</text><text transform="translate(155 436) rotate(200)" dy="11">С</text><text transform="translate(434 436) rotate(-110)" dy="11">З</text></g>
        <path d="M197 246L294 270V410L201 375z" fill="url(#gCube)"/><path d="M294 270L392 246L387 374L294 410z" fill="url(#gCube)"/><path d="M197 246L294 221L392 246L294 270z" fill="#b3b4b7"/>
        <path d="M275 268l19-7 19 7v22l-19 8-19-8z" fill="#8f9398"/>
        <path d="M197 246L294 270L392 246M294 270V410M197 246L294 221L392 246" fill="none" stroke="#3c3f44" stroke-width="3" stroke-dasharray="14 6"/>
        <g class="face"><text transform="translate(242 325) rotate(14)" dy="10">Зад</text><text transform="translate(343 325) rotate(-12)" dy="10">Слева</text><text class="top" transform="translate(295 244) rotate(192)" dy="6">Верх</text></g>
      </svg>
      <button class="ucs">Без имени<svg width="9" height="6"><path d="M.5.5h8L4.500 5z" fill="none" stroke="#b9bcc6"/></svg></button>
      <div class="navbar">
        <button class="mini r" aria-label="Закрыть панель"><svg width="9" height="9"><circle cx="4.500" cy="4.500" r="4" fill="#444950"/><path d="M3 3l3 3M6 3L3 6" stroke="#6a6f78"/></svg></button>
        <button aria-label="Штурвал"><svg width="24" height="24"><path d="M12 1.500h10.500V12A10.500 10.500 0 1 1 12 1.500z"/><circle cx="12" cy="12" r="8"/><circle cx="12" cy="12" r="5.500"/><path d="M6 18l2-2M18 18l-2-2"/></svg></button>
        <i class="tri nv"></i><hr>
        <button aria-label="Панорамирование"><svg width="24" height="24"><path d="M8 22L3 15l-2-3c1-2 3-1 5 2L5 5c1-2 3-1 3 1l1 6V3c1-2 3-2 3 0v9l1-9c1-2 3-1 3 1l-1 8 3-6c1-2 3-1 3 1l-4 10-2 6z"/></svg></button>
        <button aria-label="Зумирование"><svg width="24" height="24"><path d="M1 1l15 15M15 1L1 15M1 5V1h4M11 1h4v4M1 11v4h4"/><circle cx="16" cy="15" r="5"/><path d="M19 19l4 4" stroke-width="3"/></svg></button>
        <i class="tri nv"></i>
        <button aria-label="Орбита"><svg width="24" height="24"><ellipse cx="12" cy="14" rx="11" ry="4"/><path d="M10 22V6H8l4-5 4 5h-2v16z" fill="#565b63"/><path d="M3 17l5-3v6z" fill="#3b4047"/></svg></button>
        <i class="tri nv"></i><hr>
        <button aria-label="ShowMotion"><svg width="24" height="24"><path d="M1.500.5h6v6h-6zM9.500.5h6v6h-6zM17.500.5h5v6h-5zM1.500 10.500h16v12h-16z"/><path d="M6 12v8l6-4z" fill="#3b4047"/></svg></button>
        <button class="mini r bottom" aria-label="Настройка панели"><svg width="9" height="9"><circle cx="4.500" cy="4.500" r="4" fill="#444950"/><path d="M2 4.500h5" stroke="#6a6f78"/></svg></button>
      </div>
      <div class="cmdline">
        <div class="cmd-grip"><svg width="6" height="18"><path d="M1 0v18M4 0v18" stroke="#888" stroke-width="2" stroke-dasharray="2 1"/></svg><button aria-label="Закрыть командную строку"><svg width="10" height="10"><path d="M1 1l8 8M9 1L1 9" stroke="#ccc" stroke-width="2"/></svg></button><button aria-label="Настроить"><svg width="14" height="14"><path d="M1 3l2 2 2-2-2-2c3-1 6 2 4 5l6 6-2 2-6-7C2 8 0 5 1 3z" fill="#d0d0d0"/></svg></button></div>
        <button class="prompt" aria-label="Последние команды"><svg width="15" height="14"><path d="M.5.5h14v13H.5z" fill="#aeb1b6" stroke="#7b7e84"/><path d="M3 3l4 4-4 4M8 11h5" fill="none" stroke="#444"/></svg><i class="tri"></i></button>
        <input type="text" placeholder="Введите команду" aria-label="Командная строка">
        <button class="hist" aria-label="Журнал команд"><svg width="7" height="5"><path d="M0 4h7L3.500 0z" fill="#444"/></svg></button>
      </div>
    </div>
    <div class="vscroll"><svg width="7" height="5"><path d="M0 4h7L3.500 0z" fill="#444"/></svg><span class="thumb"></span></div>
    <div class="sheets">
      <div class="sheet-nav">
        <button aria-label="В начало"><svg width="9" height="10"><path d="M1.500 0v10" stroke="#555"/><path d="M8 0v10L3 5z" fill="#555"/></svg></button><button aria-label="Назад"><svg width="6" height="10"><path d="M5 0v10L0 5z" fill="#555"/></svg></button><button aria-label="Вперед"><svg width="6" height="10"><path d="M0 0v10l5-5z" fill="#555"/></svg></button><button aria-label="В конец"><svg width="9" height="10"><path d="M7.500 0v10" stroke="#555"/><path d="M1 0v10l5-5z" fill="#555"/></svg></button>
      </div>
      <svg class="slash" width="8" height="17" viewBox="0 0 8 17"><path d="M0 0l7 16.500h1V0z" fill="#fff"/><path d="M1 0l6 16" stroke="#333"/></svg>
      <a href="#" class="on">Модель</a><svg class="slash" width="8" height="17" viewBox="0 0 8 17"><path d="M0 0h7L0 17z" fill="#fff"/><path d="M7 0L1 16" stroke="#333"/></svg>
      <a href="#">Лист1</a><svg class="slash" width="8" height="17" viewBox="0 0 8 17"><path d="M7 0L1 16" stroke="#333"/></svg>
      <a href="#">Лист2</a><svg class="slash" width="8" height="17" viewBox="0 0 8 17"><path d="M7 0L1 16" stroke="#333"/></svg>
      <div class="hscroll"><i class="splitter"></i><svg width="5" height="7"><path d="M4 0v7L0 3.500z" fill="#333"/></svg><span class="hthumb"></span></div>
    </div>
  </div>

  <footer class="status">
    <output class="coords">125.2127,&nbsp; 972.8873&nbsp; , 0.0000</output>
    <div class="modes">
      <button aria-label="Зависимости"><svg width="18" height="18"><path d="M6 1v12M0 7h12" stroke="#333"/><path d="M4 5h4v4H4z" fill="#9aa" stroke="#333"/><path d="M10.500 16v-6h5v4h-4" fill="#fff" stroke="#3858a0"/><path d="M9 14h3v3H9z" fill="#e8863a"/></svg></button>
      <button aria-label="Шаг"><svg width="18" height="18"><path d="M2 4.500h9M2 7.500h9M2 10.500h9M2 13.500h9" stroke="#333" stroke-dasharray="1 2"/><path d="M14.500 3v8M14.500 12v2" stroke="#333"/></svg></button>
      <button aria-label="Сетка"><svg width="18" height="18"><path d="M2 2.500h15M2 5.500h15M2 8.500h15M2 11.500h15M2 14.500h15M2.500 2v15M5.500 2v15M8.500 2v15M11.500 2v15M14.500 2v15" stroke="#333"/></svg></button>
      <button aria-label="Орто"><svg width="18" height="18"><path d="M3.500 1v15.500H18" fill="none" stroke="#333"/><path d="M4 11.500h5v5" fill="none" stroke="#777"/></svg></button>
      <button aria-label="Полярное"><svg width="18" height="18"><circle cx="8" cy="10" r="5" fill="none" stroke="#333"/><path d="M8 10.500l6-7M8 10.500h6" stroke="#222"/></svg></button>
      <button class="on" aria-label="Привязка"><svg width="18" height="18"><path d="M4.500 3.500h12v12h-12z" fill="url(#gDoc)" stroke="#445"/><circle cx="4" cy="3.500" r="2" fill="#fff" stroke="#d05a20"/></svg></button>
      <button class="on" aria-label="3D привязка"><svg width="18" height="18"><path d="M3.500 5.500l3-4h10v9l-3 4h-10z" fill="url(#gDoc)" stroke="#445"/><circle cx="4" cy="14" r="2" fill="#fff" stroke="#d05a20"/></svg></button>
      <button class="on" aria-label="Отслеживание"><svg width="18" height="18"><path d="M13 3L4 13.500h11" fill="none" stroke="#222"/></svg></button>
      <button class="on" aria-label="ДПСК"><svg width="18" height="18"><path d="M2.500 1v15.500H17M1 4l1.500-3L4 4M3 16L11 8" fill="none" stroke="#335"/><path d="M14 1l-4 5h3l-1 4 5-5h-3z" fill="#f5a81c"/></svg></button>
      <button class="on" aria-label="Дин"><svg width="18" height="18"><path d="M6.500 3v9M2 7.500h9" stroke="#222"/><path d="M8.500 9.500h7v3h-7z" fill="#fff" stroke="#222"/></svg></button>
      <button class="on" aria-label="Вес"><svg width="18" height="18"><path d="M3 8.500h6" stroke="#222"/><path d="M9 9h7M10 3v12" stroke="#111" stroke-width="2"/></svg></button>
      <button class="on" aria-label="Прозрачность"><svg width="18" height="18"><path d="M2.500 2.500h14v13h-14z" fill="#e8f3fa" stroke="#3b7cb8"/><path d="M4 5h11M4 9h11M4 13h11" stroke="#6fa8cf" stroke-width="2" stroke-dasharray="2 2"/><path d="M6 7h9M6 11h9" stroke="#6fa8cf" stroke-width="2" stroke-dasharray="2 2"/></svg></button>
      <button aria-label="Быстрые свойства"><svg width="18" height="18"><path d="M5.500 3.500h7v10h-7z" fill="#fff" stroke="#111"/><path d="M7 6.500h1M9 6.500h2M7 8.500h1M9 8.500h2M7 10.500h1M9 10.500h2" stroke="#111"/></svg></button>
      <button aria-label="Цикл выбора"><svg width="18" height="18"><path d="M3.500 0v8M0 3.500h8" stroke="#333"/><path d="M5.500 7.500h7v6h-7z" fill="#fff" stroke="#333"/><path d="M9.500 9.500h7v7h-7z" fill="#6cb35c" stroke="#2c6a22"/></svg></button>
      <button aria-label="Монитор"><svg width="18" height="18"><path d="M6.500 1.500h5v5h5v5h-5v5h-5v-5h-5v-5h5z" fill="#fff" stroke="#444"/></svg></button>
    </div>
    <div class="tools">
      <button class="space">РМОДЕЛЬ</button>
      <button aria-label="Модель"><svg width="16" height="16"><path d="M1.500 1.500h13v13h-13z" fill="#eee" stroke="#333"/><path d="M4.500 4.500l6 8h-6z" fill="#fff" stroke="#333"/></svg></button>
      <button aria-label="Просмотр листов"><svg width="19" height="16"><path d="M1.500 2.500h7v7h-7zM10.500 2.500h7v7h-7z" fill="#eee" stroke="#333"/><path d="M1 12.500h17" stroke="#333" stroke-width="3"/></svg></button>
      <i class="gap"></i>
      <button class="scale"><svg width="16" height="16"><path d="M8 1v7L2 15M8 8l6 7" fill="none" stroke="#222"/><path d="M8 2L2 14l6-5 6 5z" fill="#fff" stroke="#222"/></svg>1:1<i class="tri dark"></i></button>
      <button aria-label="Видимость"><svg width="18" height="16"><path d="M8 1L2 14l6-5 6 5z" fill="#fff" stroke="#333"/><circle cx="13" cy="8" r="3.500" fill="#f5a83a"/><path d="M12 12h3v3h-3z" fill="#fff"/></svg></button>
      <button aria-label="Автомасштаб"><svg width="18" height="16"><path d="M9 1L3 14l6-5 6 5z" fill="#c4c4c6" stroke="#777"/><path d="M14 2l-3 4h3l-2 4" fill="none" stroke="#888"/></svg></button>
      <i class="gap"></i>
      <button aria-label="Рабочее пространство"><svg width="18" height="18"><circle cx="9" cy="9" r="6.500" fill="#eee" stroke="#333" stroke-width="3" stroke-dasharray="3 2.100"/><circle cx="9" cy="9" r="5.500" fill="#eee" stroke="#555"/><circle cx="9" cy="9" r="2" fill="#fff" stroke="#444"/></svg></button>
      <button aria-label="Замок"><svg width="18" height="17"><path d="M1.500 7.500h9v8h-9z" fill="#fff" stroke="#333"/><path d="M8.500 7V4c0-4 7-4 7 0v3" fill="none" stroke="#333" stroke-width="2"/><path d="M6 10v3" stroke="#333" stroke-width="2"/></svg></button>
      <button aria-label="Аппаратное ускорение"><svg width="18" height="16"><path d="M1.500 2.500h13v7h-13z" fill="#8a94a6" stroke="#456"/><path d="M3.500 10v3M6.500 10v3M9.500 10v2" stroke="#456"/><circle cx="14" cy="9" r="3" fill="#cfe6f8" stroke="#589"/><path d="M13 12h2v3h-2z" fill="#589"/></svg></button>
      <div class="tray">
        <button aria-label="Публикация"><svg width="18" height="16"><path d="M2 3l3 3M8 1v4M2 10h3" stroke="#789"/><path d="M8.500 5.500h8v10h-8z" fill="#e8f1f8" stroke="#567"/><path d="M10 8.500h5M10 10.500h5M10 12.500h5" stroke="#567"/></svg></button>
        <button aria-label="Печать завершена"><svg width="18" height="16"><path d="M1.500 2.500l3-1h9v9h-12z" fill="#3a6ea8" stroke="#223"/><path d="M5 2h5v4H5z" fill="#f2d46a"/><path d="M5 10l4 4 8-7" fill="none" stroke="#6cb03a" stroke-width="3"/></svg></button>
        <button aria-label="Подсказки"><svg width="14" height="17"><path d="M5 10C0 4 4 1 7 1s7 3 2 9z" fill="#fff3a8" stroke="#8b7a3a"/><path d="M5.500 10.500h3v4h-3z" fill="#eee" stroke="#555"/></svg></button>
      </div>
      <button class="narrow" aria-label="Меню"><i class="tri dark"></i></button>
      <button aria-label="Очистить экран"><svg width="16" height="14"><path d="M1.500.5h13v13h-13z" fill="#f2f4f6" stroke="#333"/><path d="M2 1h12v3H2z" fill="#9aa3ae"/></svg></button>
    </div>
  </footer>

  <aside class="balloon" role="status">
    <svg width="16" height="16"><circle cx="8" cy="8" r="7.500" fill="#2548a8" stroke="#8a9cc8"/><path d="M8 3v2M8 7v6" stroke="#fff" stroke-width="2"/></svg>
    <strong>Задание на печать/публикацию завершено</strong>
    <button aria-label="Закрыть"><svg width="10" height="10"><path d="M1 1l8 8M9 1L1 9" stroke="#000" stroke-width="2"/></svg></button>
    <p>Ошибок и предупреждений не было</p>
    <a href="#">Просмотр подробностей о печати/публикации...</a>
    <svg class="tail" width="20" height="20"><path d="M0 0l18.500 18V0z" fill="#ffffe1"/><path d="M0 1l18.500 17V1" fill="none" stroke="#000"/></svg>
  </aside>
</div>
</body>
</html>
```

FILE: styles.css
```css
* { box-sizing: border-box; }
body { margin: 0; font: 11px/16px "Open Sans", "Noto Sans", sans-serif; color: #33363a; background: #6b6b6b; }
button, input, select { font: inherit; color: inherit; margin: 0; padding: 0; border: 0; background: none; border-radius: 0; }
select { appearance: none; outline: 0; min-width: 0; flex: 1; height: 100%; }
svg { display: block; flex: none; }
a { color: inherit; text-decoration: none; }
h1, h2, p, hr { margin: 0; font: inherit; }
.defs { position: absolute; width: 0; height: 0; }
.app { position: relative; display: flex; flex-direction: column; height: 100vh; min-height: 600px; overflow: hidden; }

.tri { flex: none; width: 0; height: 0; border: 2px solid transparent; border-top: 3px solid #3b3e42; border-bottom: 0; }
.tri.big, .tri.dark { border-width: 4px 4px 0; }
.tri.dark { border-top-color: #1c1c1c; }
.tri.dim { border-width: 3px 3px 0; border-top-color: #3f3f3f; }
.tri.lite { border-width: 3px 3px 0; border-top-color: #e8e8e8; }

/* header */
.head { display: grid; grid-template: 24px 20px / 41px 1fr; background: #3d3d3d; }
.app-btn { grid-row: 1 / 3; display: flex; align-items: center; gap: 2px; width: 40px; height: 40px; padding-left: 3px; border: 1px solid #333; background: linear-gradient(#a4a4a4, #6e6e6e 60%, #b5b5b5); }
.app-btn .tri { border-width: 3px 3px 0; }
.titlebar { display: flex; background: linear-gradient(90deg, #c9d7e6, #d9e3ed 40%, #bccbdb); border-bottom: 1px solid #8e959c; }
.qat { display: flex; align-items: center; gap: 6px; flex: 0 0 428px; padding-left: 8px; background: linear-gradient(#6f6f6f, #8f8f8f 20%, #6b6b6b); }
.workspace { display: flex; align-items: center; flex: 1; height: 20px; padding: 0 4px 0 2px; gap: 1px; background: linear-gradient(#e9e9e9, #b9b9b9); color: #000; border: 1px solid #8a8a8a; }
.qat-more { display: flex; align-items: center; justify-content: center; width: 16px; height: 22px; margin-left: -6px; border: 1px solid #555; background: linear-gradient(#8a8a8a, #555); }
.doc-title { flex: 1; display: flex; justify-content: center; align-items: center; gap: 13px; color: #111; }
.info { display: flex; align-items: center; flex: 0 0 445px; gap: 8px; background: linear-gradient(#6f6f6f, #8b8b8b 20%, #646464); color: #f2f2f2; }
.info-toggle { display: flex; align-items: center; justify-content: center; width: 14px; height: 23px; border: 1px solid #555; background: linear-gradient(#999, #555); }
.search { width: 179px; height: 20px; margin-left: -8px; margin-right: -3px; padding-left: 2px; align-self: flex-end; background: #f8f8f8; font-style: italic; }
.search::placeholder { color: #777; opacity: 1; }
.signin { display: flex; align-items: center; gap: 5px; white-space: nowrap; }
.bar { width: 1px; height: 16px; margin: 0 2px; background: #8b8b8b; }
.winctl { display: flex; flex: 0 0 122px; justify-content: flex-end; padding-right: 3px; }
.winctl button { display: flex; align-items: center; justify-content: center; width: 28px; height: 18px; border: 1px solid #929eac; border-top: 0; background: linear-gradient(#d5dfe9, #c3cfdc); }
.winctl button + button { border-left: 0; }
.winctl button:first-child { border-radius: 0 0 0 4px; }
.winctl .close { width: 46px; border-radius: 0 0 4px 0; }
.tabs { display: flex; align-items: flex-end; padding-left: 5px; color: #efefef; }
.tabs a { padding: 1px 10px; line-height: 16px; }
.tabs a.on { padding: 1px 9px; background: linear-gradient(#e1e1e1, #fff); color: #333; border-radius: 1px 1px 0 0; margin-right: 1px; }
.fold { display: flex; align-items: center; gap: 6px; margin-left: 21px; height: 19px; }

/* ribbon */
.ribbon { display: flex; height: 100px; padding-right: 3px; background: #fff; border-bottom: 1px solid #cfcfcf; border-left: 1px solid #888; }
.panel { display: flex; flex-direction: column; min-width: 0; border-right: 1px solid #a2a2a2; padding: 0 1px 0 2px; }
.panel h2 { display: flex; align-items: center; justify-content: center; gap: 7px; height: 18px; margin-bottom: 1px; padding-bottom: 1px; background: #eee; border-top: 1px solid #d2d2d2; position: relative; white-space: nowrap; }
.p-draw { flex: 262 1 262px; }
.p-edit { flex: 348 1 348px; }
.p-layers { flex: 214 1 214px; }
.p-anno { flex: 158 1 158px; }
.p-block { flex: 170 1 170px; }
.p-props { flex: 162 1 162px; }
.p-group { flex: 75 1 75px; }
.p-util { flex: 106 1 106px; }
.p-clip { flex: 101 1 101px; border-right: 0; }
.body { display: flex; flex: 1; padding-top: 6px; }
.body.col { flex-direction: column; gap: 2px; }
.row { display: flex; justify-content: space-between; align-items: center; height: 22px; }
.stack { display: flex; flex-direction: column; gap: 2px; }
.end { margin-left: auto; margin-right: 5px; }
.p-group .end, .p-util .end, .p-clip .end { margin-right: 1px; }
.grow { flex: 1; }
.grow .cmd { padding-left: 4px; }
.bigbtn { display: flex; flex-direction: column; align-items: center; flex: none; height: 70px; white-space: nowrap; }
.bigbtn svg { height: 34px; }
.bigbtn span { line-height: 18px; margin-top: 2px; }
.bigbtn .tri { margin-top: 1px; }
.w42 { width: 42px; } .w46 { width: 46px; } .w52 { width: 52px; } .w54 { width: 54px; } .w56 { width: 56px; }
.w58 { width: 56px; } .w64 { width: 64px; } .w72 { width: 72px; } .w78 { width: 78px; }
.ib { display: flex; align-items: center; justify-content: center; width: 24px; height: 22px; border: 1px solid #d0d2d5; background: linear-gradient(#fff, #f1f2f4); }
.ib.on { background: #a9cdf3; border-color: #4a86c6; }
.split { width: 36px; justify-content: flex-start; gap: 0; padding-left: 3px; background: linear-gradient(90deg, transparent 22px, #d0d2d5 22px, #d0d2d5 23px, transparent 23px), #f6f7f8; }
.split .tri { margin: 0 3px 0 auto; }
.pair { display: flex; }
.pair .ib + .ib { border-left: 0; }
.cmds { display: grid; grid-auto-rows: 22px; gap: 2px 0; align-content: start; flex: 1; }
.three { grid-template-columns: 100px 94px 1fr; padding-left: 4px; }
.one { padding-left: 3px; }
.cmd { display: flex; align-items: center; gap: 5px; height: 22px; white-space: nowrap; }
.cmd .tri { margin-left: 5px; }
.combo { display: flex; align-items: center; flex: 1 1 22px; max-height: 22px; min-width: 0; height: 22px; padding: 0 3px 0 2px; border: 1px solid #cdcfd2; background: linear-gradient(#fff, #f2f2f3); }
.combo .layer-ico { margin-right: 4px; }
.row.prop { justify-content: flex-start; gap: 3px; }
.prop .combo { gap: 2px; }
.swatch { flex: none; width: 16px; height: 16px; background: #0f0; border: 1px solid #222; }
.lw { flex: none; width: 64px; height: 5px; margin-left: 1px; background: #000; }
.lt { flex: none; width: 59px; height: 1px; margin-left: 6px; background: #000; }
.launch { position: absolute; right: 5px; top: 6px; }

/* drawing area */
.work { flex: 1; min-height: 0; display: grid; grid-template: 1fr 19px / 1fr 18px; margin: 5px 4px 0 1px; border: solid #a5a7a8; border-width: 2px 1px 0 2px; }
.viewport { position: relative; background: #21272f; }
.drawing { position: absolute; inset: 0; width: 100%; height: 100%; }
.vp-label { position: absolute; left: 4px; top: 5px; color: #f0f0f0; }
.vp-ctl { position: absolute; right: 9px; top: 8px; display: flex; gap: 8px; }
.viewcube { position: absolute; right: 14px; top: 69px; width: 130px; height: 90px; }
.compass { font-size: 36px; fill: #a6a9ad; text-anchor: middle; }
.face { font-size: 30px; fill: #43464b; text-anchor: middle; }
.face .top { font-size: 20px; }
.ucs { position: absolute; right: 42px; top: 185px; display: flex; align-items: center; gap: 7px; height: 18px; padding: 0 4px; border: 1px solid #8f919d; border-radius: 4px; background: #9496a3; color: #5d606d; font-size: 10px; }
.navbar { position: absolute; right: 3px; top: 204px; width: 32px; height: 212px; padding: 1px 2px; display: flex; flex-direction: column; align-items: center; gap: 3px; border: 1px solid #656b74; border-radius: 4px; background: #565b63; }
.navbar svg { fill: none; stroke: #3b4047; }
.navbar .mini svg { stroke: none; }
.navbar hr { width: 28px; border: 0; border-top: 1px solid #676c75; }
.navbar .r { align-self: flex-end; }
.navbar .r + button { margin-top: 5px; }
.navbar .bottom { margin-top: auto; }
.tri.nv { border-top-color: #3b4047; margin: 2px 0; }
.cmdline { position: absolute; z-index: 3; left: 318px; right: 301px; bottom: 0; display: flex; height: 26px; align-items: center; background: rgba(205, 205, 207, .9); border: 1px solid #8d8f92; }
.cmd-grip { display: flex; align-items: center; justify-content: space-around; width: 54px; height: 24px; background: #3f4245; }
.prompt { display: flex; align-items: center; gap: 4px; margin: 0 7px 0 4px; }
.cmdline input { flex: 1; height: 24px; font: italic 12px/16px "DejaVu Sans Mono", monospace; color: #666; outline: 0; }
.cmdline input::placeholder { color: #6b6c6e; opacity: 1; }
.hist { padding: 0 3px; }
.vscroll { display: flex; flex-direction: column; align-items: center; padding-top: 7px; background: #f0f0f0; border-left: 1px solid #fff; }
.thumb { width: 15px; height: 15px; margin-top: 82px; border: 1px solid #909090; border-radius: 2px; background: linear-gradient(90deg, #f6f6f6, #cdcdcd); }
.sheets { grid-column: 1 / 3; display: flex; align-items: flex-start; background: #f0f0f0; border-top: 1px solid #fff; color: #111; font: 11px/17px "Liberation Sans", sans-serif; }
.sheet-nav { display: flex; }
.sheet-nav button { display: flex; align-items: center; justify-content: center; width: 15px; height: 16px; border: 1px solid #b5b5b5; border-left-color: #fff; }
.sheets a { padding: 0 7px 0 4px; height: 17px; }
.sheets a.on { background: #fff; }
.hscroll { display: flex; align-items: center; flex: 0 0 553px; margin-left: auto; height: 17px; gap: 8px; }
.splitter { width: 5px; height: 14px; border: 1px solid #aaa; border-radius: 2px; background: #fff; }
.hthumb { width: 15px; height: 14px; margin-left: auto; margin-right: 36px; border: 1px solid #999; border-radius: 2px; background: #ddd; }

/* status bar */
.status { display: flex; height: 22px; background: linear-gradient(#5e5e5e, #8b8b8b 15%, #777); border-top: 1px solid #333; color: #111; }
.coords { flex: 0 0 190px; padding-left: 12px; font: 11px/22px "Liberation Sans", sans-serif; white-space: nowrap; }
.modes { display: flex; }
.status button { display: flex; align-items: center; justify-content: center; height: 21px; }
.modes button { width: 22px; border-right: 1px solid #8a8a8a; background: linear-gradient(#b9b9bb, #a2a2a4); }
.modes button.on { background: linear-gradient(#a9d4e3, #d6eef5 50%, #8ec3d6); }
.tools { display: flex; margin-left: auto; background: #a9a9ab; }
.tools > button { padding: 0 2px; border-left: 1px solid #8c8c8e; background: linear-gradient(#b9b9bb, #9e9ea0); }
.tools .space { font: 11px/16px "Liberation Sans", sans-serif; padding: 0 3px; }
.tools .scale { gap: 3px; padding: 0 5px 0 2px; }
.tools .narrow { padding: 0 5px; margin-left: 3px; }
.gap { width: 7px; background: #5c5c5c; }
.tray { display: flex; gap: 3px; padding: 0 4px; border: 1px solid #555; background: #8d8d8f; }

/* notification */
.balloon { position: absolute; z-index: 2; right: 13px; bottom: 30px; display: grid; grid-template-columns: 16px 1fr 16px; align-items: center; column-gap: 10px; row-gap: 5px; width: 333px; padding: 9px 8px 11px 9px; background: #ffffe1; border: 1px solid #000; border-radius: 14px; color: #222; white-space: nowrap; }
.balloon strong { font-weight: 700; color: #111; text-align: center; }
.balloon button { display: flex; align-items: center; justify-content: center; width: 16px; height: 16px; background: #f0f0e4; border: 1px solid #999; }
.balloon p, .balloon a { grid-column: 1 / 4; padding-left: 6px; }
.balloon a { color: #1515b0; text-decoration: underline; }
.tail { position: absolute; right: 79px; top: 100%; }
```
